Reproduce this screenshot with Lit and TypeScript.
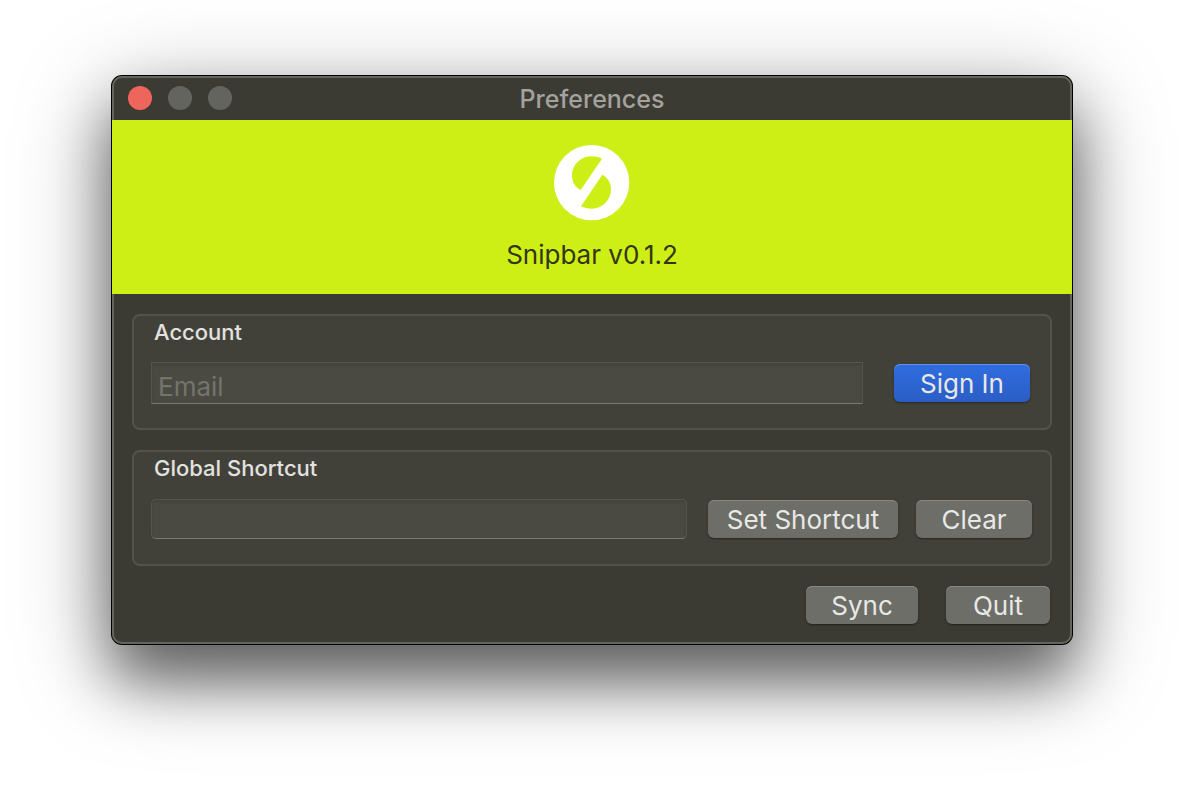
import { LitElement, html, css } from "lit";
import { customElement } from "lit/decorators.js";

@customElement("app-root")
export class AppRoot extends LitElement {
  static styles = css`
    :host {
      display: block;
      box-sizing: border-box;
      min-height: 100vh;
      padding: 76px 112px 0;
      background: #fff;
      overflow: hidden;
      font-family: Inter, "Liberation Sans", sans-serif;
      font-size: 26px;
      line-height: 32px;
      color: #e2e2e0;
    }
    * {
      box-sizing: border-box;
    }
    .window {
      border-radius: 10px;
      background: #3b3a33;
      box-shadow:
        inset 0 0 0 2px #65655f,
        0 0 0 1px #000,
        0 36px 56px rgba(0, 0, 0, 0.45),
        0 24px 96px rgba(0, 0, 0, 0.4);
    }
    .titlebar {
      display: grid;
      grid-template-columns: 1fr auto 1fr;
      align-items: center;
      height: 44px;
      padding: 0 16px;
    }
    .lights {
      display: flex;
      gap: 16px;
    }
    .light {
      width: 24px;
      height: 24px;
      padding: 0;
      border: 0;
      border-radius: 50%;
      background: #63645e;
    }
    .close {
      background: #ee655b;
    }
    .title {
      margin: 0;
      padding-top: 2px;
      font-size: 25px;
      font-weight: 500;
      color: #a3a29e;
    }
    .banner {
      display: flex;
      flex-direction: column;
      align-items: center;
      gap: 18px;
      padding: 25px 0 23px;
      background: #ceef15;
      color: #33350f;
    }
    .logo {
      display: block;
      width: 76px;
      height: 76px;
    }
    .version {
      margin: 0;
    }
    .body {
      display: flex;
      flex-direction: column;
      gap: 20px;
      padding: 20px;
    }
    .group {
      padding: 0 18px 24px 17px;
      border: 2px solid #53534d;
      border-radius: 8px;
      background: #424139;
    }
    .label {
      display: block;
      padding: 0 3px 14px;
      font-size: 22px;
      font-weight: 500;
    }
    .row {
      display: flex;
      align-items: center;
      height: 42px;
    }
    .field {
      flex: 1;
      min-width: 0;
      height: 40px;
      padding: 6px 6px 0;
      border: 1px solid #55554f;
      border-bottom-color: #7a7a74;
      border-radius: 5px;
      outline: 0;
      background: #4b4a42;
      box-shadow: inset 0 2px 3px rgba(60, 62, 56, 0.6);
      color: inherit;
      font: inherit;
    }
    .email {
      height: 42px;
      margin-right: 31px;
      border-radius: 0;
    }
    .shortcut {
      margin-right: 21px;
    }
    .field::placeholder {
      color: #74746e;
      opacity: 1;
    }
    .button {
      height: 38px;
      padding: 2px 0 0;
      border: 0;
      border-radius: 6px;
      background: #6d6e67;
      box-shadow:
        inset 0 1px 0 #888983,
        0 1px 2px rgba(0, 0, 0, 0.45);
      color: #e8e8e6;
      font: inherit;
      white-space: nowrap;
    }
    .primary {
      width: 136px;
      margin-right: 2px;
      background: linear-gradient(#306de0, #2b5dc5);
      box-shadow:
        inset 0 1px 0 #6591e6,
        0 1px 2px rgba(0, 0, 0, 0.45);
    }
    .set {
      width: 190px;
      margin-right: 18px;
    }
    .clear {
      width: 116px;
    }
    .footer {
      display: flex;
      justify-content: flex-end;
      gap: 28px;
      padding-right: 2px;
    }
    .sync {
      width: 112px;
    }
    .quit {
      width: 104px;
    }
  `;

  render() {
    return html`
      <main class="window">
        <header class="titlebar">
          <div class="lights">
            <button class="light close" aria-label="Close"></button>
            <button class="light" aria-label="Minimize" disabled></button>
            <button class="light" aria-label="Zoom" disabled></button>
          </div>
          <h1 class="title">Preferences</h1>
        </header>
        <section class="banner">
          <svg class="logo" viewBox="0 0 228 228" aria-hidden="true">
            <circle cx="113" cy="113" r="113" fill="#fff" />
            <path
              fill="#ceef15"
              d="M144 41C134 36 124 34 113 34C80 34 54 60 54 92C54 111 64 126 80 135ZM145 89C161 98 171 113 171 132C171 165 145 191 113 191C101 191 90 189 81 184Z"
            />
          </svg>
          <p class="version">Snipbar v0.1.2</p>
        </section>
        <div class="body">
          <section class="group">
            <label class="label" for="email">Account</label>
            <div class="row">
              <input class="field email" id="email" type="email" placeholder="Email" />
              <button class="button primary">Sign In</button>
            </div>
          </section>
          <section class="group">
            <label class="label" for="shortcut">Global Shortcut</label>
            <div class="row">
              <input class="field shortcut" id="shortcut" type="text" readonly />
              <button class="button set">Set Shortcut</button>
              <button class="button clear">Clear</button>
            </div>
          </section>
          <footer class="footer">
            <button class="button sync">Sync</button>
            <button class="button quit">Quit</button>
          </footer>
        </div>
      </main>
    `;
  }
}
